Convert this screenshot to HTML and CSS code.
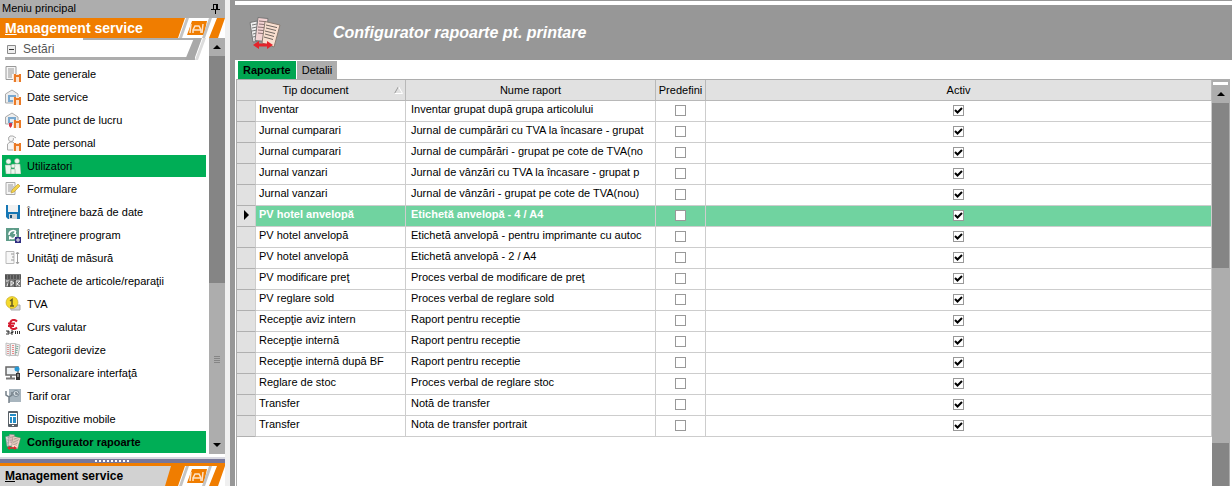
FILE: index.html
```html
<!DOCTYPE html>
<html lang="ro">

<head>
    <meta charset="utf-8">
    <meta name="viewport" content="width=device-width, initial-scale=1.0">
    <title>Configurator rapoarte pt. printare</title>
    <link rel="stylesheet" href="styles.css">
</head>

<body>
    <!-- shared icon parts -->
    <svg class="defs" aria-hidden="true">
        <symbol id="lift" viewBox="0 0 16 16">
            <path d="M8 8h8v8H8z" fill="#fbe3d0" />
            <path d="M9 8h2v8H9zM14 8h2v8h-2zM11 9h3v2h-3z" fill="#ea7a26" />
        </symbol>
        <symbol id="reports" viewBox="0 0 32 32">
            <path d="M1 5.500L8 4l3 20-7 1z" fill="#eee" stroke="#777" />
            <path d="M3 8l5-1M3 11l5-1M3 14l5-1M4 17l4-1M4 20l4-1" stroke="#777" />
            <path d="M9 .5l10 1-2 23-11-1z" fill="#f3d3d3" stroke="#777" />
            <path d="M10 4l7 .7M10 7l7 .7M9 10l7 .7M9 13l7 .7M9 16l6 .7" stroke="#8a7070" />
            <path d="M16 4.500L31 8l-6 22-12-4z" fill="#f9dfd0" stroke="#887a70" />
            <path d="M17 8l11 2.600M17 11l10 2.500M16 14l10 2.500M16 17l9 2.500M15 20l9 2.500" stroke="#6f6660" />
            <path d="M4 28l6-4v2.500h8V24l6 4-6 4v-2.500h-8V32z" fill="#e3242b" />
        </symbol>
        <symbol id="stripes" viewBox="0 0 52 20">
            <path d="M12 0h40v20H5z" fill="#fff" />
            <path d="M13 0h3L9 20H6z" fill="#c4c4c4" />
            <path d="M19 3h15l-3 14H14z" fill="#f07d00" />
            <path d="M18 6l-1 9M30 6l-1 9" fill="none" stroke="#fde3c8" stroke-width="1.500" />
            <path d="M20 15v-3l2-4h4l2 4v3M20 12h8" fill="none" stroke="#fde3c8" stroke-width="1.500" />
            <path d="M36 0h3l-7 20h-3z" fill="#c4c4c4" />
            <path d="M44 0h8l-7 20h-9z" fill="#f07d00" />
        </symbol>
    </svg>

    <div class="app">
        <aside class="sidebar">
            <div class="caption">
                <span>Meniu principal</span>
                <button class="pin" aria-label="Fixează meniul">
                    <svg width="9" height="11" viewBox="0 0 9 11"><path d="M2.500 1v5M2 1.500h4M0 6.500h9M4.500 7v4" stroke="#000" fill="none" /><path d="M5 1h2v6H5z" /></svg>
                </button>
            </div>
            <button class="group"><span><u>M</u>anagement service</span><svg width="52" height="20"><use href="#stripes" /></svg></button>

            <div class="panel">
                <div class="menu">
                    <button class="section" aria-expanded="true">
                        <svg width="9" height="9" viewBox="0 0 9 9"><path d="M.5.5h8v8h-8z" fill="#eee" stroke="#8a8a8a" /><path d="M2 4.500h5" stroke="#333" /></svg>
                        <span>Setări</span>
                        <svg class="slant" width="124" height="22" viewBox="0 0 124 22"><path d="M0 0h112v2H0z" fill="#adadad" /><path d="M111 0h8l-8 22h-9z" fill="#a8a8a8" /><path d="M120 0h3l-8 22h-3z" fill="#dcdcdc" /></svg>
                    </button>
                    <nav>
                        <a href="#" class="item"><svg viewBox="0 0 16 16"><path d="M1 .5h10v13H1z" fill="#f5f5f5" stroke="#999" /><path d="M3 3h6M3 5h6M3 7h6M3 9h4M3 11h4" stroke="#999" /><use href="#lift" /></svg>Date generale</a>
                        <a href="#" class="item"><svg viewBox="0 0 16 16"><path d="M.5 14V5L7 1l6 4v9z" fill="#eee" stroke="#aaa" /><path d="M3 6h8v7H3z" fill="#79a8cf" /><path d="M5 8h4v3H5z" fill="#dcecf6" /><use href="#lift" /></svg>Date service</a>
                        <a href="#" class="item"><svg viewBox="0 0 16 16"><path d="M.5 12V5L7 1l6 4v7z" fill="#eee" stroke="#aaa" /><path d="M3 5h8v6H3z" fill="#79a8cf" /><path d="M5 7h4v3H5z" fill="#dcecf6" /><path d="M4 11h3v3l-1.500 2L4 14z" fill="#d93545" /><use href="#lift" /></svg>Date punct de lucru</a>
                        <a href="#" class="item"><svg viewBox="0 0 16 16"><circle cx="6" cy="4" r="2.500" fill="#f6f6f6" stroke="#aaa" /><path d="M3.500 3L5 1h3l3 2M2.500 15V9L5 7h3l2 2v6z" fill="#f6f6f6" stroke="#aaa" /><use href="#lift" /></svg>Date personal</a>
                        <a href="#" class="item active"><svg viewBox="0 0 16 16"><g fill="#eef7ee" stroke="#8aa892" stroke-width=".5"><circle cx="3.500" cy="3.500" r="2.500" /><circle cx="12" cy="3" r="2.500" /><path d="M0 7h6v9H1zM9 6h6l1 10h-6z" /><circle cx="8" cy="8" r="2" /><path d="M6 11h4v5H6z" /></g></svg>Utilizatori</a>
                        <a href="#" class="item"><svg viewBox="0 0 16 16"><path d="M1 1.500h9v12H1z" fill="#f5f5f5" stroke="#aaa" /><path d="M3 4h5M3 6h6M3 8h5M3 10h4" stroke="#999" /><path d="M6 12l1-3 6-6 2 2-6 6z" fill="#f3d34a" stroke="#b7962f" stroke-width=".6" /></svg>Formulare</a>
                        <a href="#" class="item"><svg viewBox="0 0 16 16"><path d="M1 1h14v14H3l-2-2z" fill="#1677b5" /><path d="M3 1h10v7H3z" fill="#f2f2f2" /><path d="M4 10h8v5H4z" fill="#d0d5d8" /><path d="M5 11h2v3H5z" fill="#174f78" /></svg>Întreţinere bază de date</a>
                        <a href="#" class="item"><svg viewBox="0 0 16 16"><path d="M1 1h13v13H1z" fill="#5e9c89" /><path d="M4 8a4 4 0 0 1 7-3M11 7a4 4 0 0 1-6 4" fill="none" stroke="#fff" stroke-width="1.500" /><path d="M11 3v4H8zM4 9v4l3-3z" fill="#fff" /><path d="M10 10h6v6h-6z" fill="#302e82" /><path d="M11 13h4M13 11v4" stroke="#eee" /></svg>Întreţinere program</a>
                        <a href="#" class="item"><svg viewBox="0 0 16 16"><path d="M1 1.500h8v12H1z" fill="#f7f7f7" stroke="#bbb" /><path d="M6 4h3M7 7h2M6 10h3M12.500 3v10M11 4l1.500-2L14 4M11 12l1.500 2 1.500-2" fill="none" stroke="#999" /></svg>Unităţi de măsură</a>
                        <a href="#" class="item"><svg viewBox="0 0 16 16"><path d="M0 1h16v13H0z" fill="#777" /><path d="M0 3h16M0 5h16" stroke="#333" stroke-dasharray="2 1" /><path d="M1 8h3l-2 5M6 13V8l3 2-3 2M11 13V8h4l-3 3 3 2" fill="none" stroke="#eee" /><path d="M4 8v6M10 7v7" stroke="#333" /></svg>Pachete de articole/reparaţii</a>
                        <a href="#" class="item"><svg viewBox="0 0 16 16"><path d="M5 9h10v5H6z" fill="#d4d4d4" stroke="#aaa" /><circle cx="7" cy="6.500" r="6" fill="#f5da2c" stroke="#bda32a" stroke-width=".6" /><path d="M5 5l2-1.500V10M5 10h4" fill="none" stroke="#665c20" stroke-width="1.500" /></svg>TVA</a>
                        <a href="#" class="item"><svg viewBox="0 0 16 16"><path d="M12 2.500C9-.5 5 1 5 5.500s4 6 7 3M3 4.500h7M3 7h6" fill="none" stroke="#d51c30" stroke-width="2" /><path d="M1 12h3v3H1M4 13H2M6 12h2v1.500H6V15h2M10.500 12v3M12.500 12v3M14.500 12v3" fill="none" stroke="#333" /></svg>Curs valutar</a>
                        <a href="#" class="item"><svg viewBox="0 0 16 16"><path d="M1 1l4 1v12l-4-1zM5.500 1.500h5v12h-5zM11 2l4 1-2 11-3-1z" fill="#f3f3f3" stroke="#aaa" stroke-width=".7" /><path d="M3 3v9" stroke="#d99" stroke-width="2" stroke-dasharray="1" /><path d="M8 3v9" stroke="#e88" stroke-width="2" stroke-dasharray="1" /><path d="M12.500 4L11 12" stroke="#7a9" stroke-width="2" stroke-dasharray="1" /></svg>Categorii devize</a>
                        <a href="#" class="item"><svg viewBox="0 0 16 16"><path d="M1 2h12v8H1z" fill="#eef2f4" stroke="#666" stroke-width="1.500" /><path d="M1 13.500h9M6 10v3" stroke="#777" stroke-width="2" /><circle cx="12" cy="4" r="2.500" fill="#2797d3" /><path d="M11 8h4v7h-4z" fill="#333" /><path d="M13 9v3" stroke="#ddd" /></svg>Personalizare interfaţă</a>
                        <a href="#" class="item"><svg viewBox="0 0 16 16"><path d="M4 1h12v13H4z" fill="#a8b5be" /><circle cx="11" cy="5.500" r="3" fill="#d5dde2" stroke="#788894" /><path d="M11 4v2h2M4 15V9L1 7V3M4 9l3-2V4" fill="none" stroke="#758089" stroke-width="1.500" /></svg>Tarif orar</a>
                        <a href="#" class="item"><svg viewBox="0 0 16 16"><rect x="3" width="10" height="16" rx="1" fill="#596168" /><path d="M4 2h8v11H4z" fill="#fff" /><path d="M5 3h6v2H5zM5 6h2v6H5zM8 6h3v6H8z" fill="#258dc6" /><path d="M7 14.500h2" stroke="#fff" /></svg>Dispozitive mobile</a>
                        <a href="#" class="item active current"><svg viewBox="0 0 32 32"><use href="#reports" width="32" height="32" /></svg>Configurator rapoarte</a>
                    </nav>
                </div>
                <div class="scroll side-scroll">
                    <button class="arrow" aria-label="Sus"><i class="up"></i></button>
                    <div class="side-thumb"></div>
                    <div class="grip"></div>
                    <button class="arrow" aria-label="Jos"><i class="down"></i></button>
                </div>
            </div>

            <div class="splitter"><span></span></div>
            <button class="group collapsed"><span><u>M</u>anagement service</span><svg width="62" height="20" viewBox="-10 0 62 20"><path d="M-2 0h18l-7 20H-8z" fill="#f07d00" /><use href="#stripes" width="52" height="20" /></svg></button>
        </aside>

        <main class="content">
            <header class="title">
                <svg width="32" height="32"><use href="#reports" /></svg>
                <h1>Configurator rapoarte pt. printare</h1>
            </header>
            <div class="tabs" role="tablist">
                <button class="tab selected" role="tab" aria-selected="true">Rapoarte</button>
                <button class="tab" role="tab" aria-selected="false">Detalii</button>
            </div>
            <div class="grid">
                <div class="grid-body">
                    <table>
                        <colgroup>
                            <col class="c-mark">
                            <col class="c-tip">
                            <col class="c-nume">
                            <col class="c-pre">
                            <col>
                        </colgroup>
                        <thead>
                            <tr>
                                <th colspan="2"><div class="sorted"><span>Tip document</span><svg width="9" height="8" viewBox="0 0 9 8"><path d="M.5 7.500L4.500.5" stroke="#999" /><path d="M4.500.5l4 7h-8" fill="none" stroke="#fff" /></svg></div></th>
                                <th>Nume raport</th>
                                <th>Predefini</th>
                                <th>Activ</th>
                            </tr>
                        </thead>
                        <tbody>
                            <tr><td></td><td>Inventar</td><td>Inventar grupat după grupa articolului</td><td><input type="checkbox" aria-label="Predefinit"></td><td><input type="checkbox" aria-label="Activ" checked></td></tr>
                            <tr><td></td><td>Jurnal cumparari</td><td>Jurnal de cumpărări cu TVA la încasare - grupat</td><td><input type="checkbox" aria-label="Predefinit"></td><td><input type="checkbox" aria-label="Activ" checked></td></tr>
                            <tr><td></td><td>Jurnal cumparari</td><td>Jurnal de cumpărări - grupat pe cote de TVA(no</td><td><input type="checkbox" aria-label="Predefinit"></td><td><input type="checkbox" aria-label="Activ" checked></td></tr>
                            <tr><td></td><td>Jurnal vanzari</td><td>Jurnal de vânzări cu TVA la încasare - grupat p</td><td><input type="checkbox" aria-label="Predefinit"></td><td><input type="checkbox" aria-label="Activ" checked></td></tr>
                            <tr><td></td><td>Jurnal vanzari</td><td>Jurnal de vânzări - grupat pe cote de TVA(nou)</td><td><input type="checkbox" aria-label="Predefinit"></td><td><input type="checkbox" aria-label="Activ" checked></td></tr>
                            <tr class="row-selected"><td><i class="right"></i></td><td>PV hotel anvelopă</td><td>Etichetă anvelopă - 4 / A4</td><td><input type="checkbox" aria-label="Predefinit"></td><td><input type="checkbox" aria-label="Activ" checked></td></tr>
                            <tr><td></td><td>PV hotel anvelopă</td><td>Etichetă anvelopă - pentru imprimante cu autoc</td><td><input type="checkbox" aria-label="Predefinit"></td><td><input type="checkbox" aria-label="Activ" checked></td></tr>
                            <tr><td></td><td>PV hotel anvelopă</td><td>Etichetă anvelopă - 2 / A4</td><td><input type="checkbox" aria-label="Predefinit"></td><td><input type="checkbox" aria-label="Activ" checked></td></tr>
                            <tr><td></td><td>PV modificare preţ</td><td>Proces verbal de modificare de preţ</td><td><input type="checkbox" aria-label="Predefinit"></td><td><input type="checkbox" aria-label="Activ" checked></td></tr>
                            <tr><td></td><td>PV reglare sold</td><td>Proces verbal de reglare sold</td><td><input type="checkbox" aria-label="Predefinit"></td><td><input type="checkbox" aria-label="Activ" checked></td></tr>
                            <tr><td></td><td>Recepţie aviz intern</td><td>Raport pentru receptie</td><td><input type="checkbox" aria-label="Predefinit"></td><td><input type="checkbox" aria-label="Activ" checked></td></tr>
                            <tr><td></td><td>Recepţie internă</td><td>Raport pentru receptie</td><td><input type="checkbox" aria-label="Predefinit"></td><td><input type="checkbox" aria-label="Activ" checked></td></tr>
                            <tr><td></td><td>Recepţie internă după BF</td><td>Raport pentru receptie</td><td><input type="checkbox" aria-label="Predefinit"></td><td><input type="checkbox" aria-label="Activ" checked></td></tr>
                            <tr><td></td><td>Reglare de stoc</td><td>Proces verbal de reglare stoc</td><td><input type="checkbox" aria-label="Predefinit"></td><td><input type="checkbox" aria-label="Activ" checked></td></tr>
                            <tr><td></td><td>Transfer</td><td>Notă de transfer</td><td><input type="checkbox" aria-label="Predefinit"></td><td><input type="checkbox" aria-label="Activ" checked></td></tr>
                            <tr><td></td><td>Transfer</td><td>Nota de transfer portrait</td><td><input type="checkbox" aria-label="Predefinit"></td><td><input type="checkbox" aria-label="Activ" checked></td></tr>
                        </tbody>
                    </table>
                </div>
                <div class="scroll grid-scroll">
                    <div class="split-handle"></div>
                    <button class="arrow" aria-label="Sus"><i class="up"></i></button>
                    <div class="thumb"></div>
                    <div class="track"></div>
                    <div class="thumb"></div>
                </div>
            </div>
        </main>
    </div>
</body>

</html>
```
FILE: styles.css
```css
* {
    box-sizing: border-box;
}

body {
    margin: 0;
    font-family: "Liberation Sans", Arial, sans-serif;
    font-size: 11px;
    color: #000;
    background-color: #fff;
}

button {
    margin: 0;
    padding: 0;
    border: none;
    background: none;
    font: inherit;
    color: inherit;
    text-align: left;
}

svg {
    display: block;
    flex: none;
}

.defs {
    position: absolute;
    width: 0;
    height: 0;
}

.app {
    display: flex;
    height: 100vh;
    overflow: hidden;
}

/* left menu */
.sidebar {
    display: flex;
    flex-direction: column;
    width: 230px;
    flex: none;
    padding-right: 5px;
    background-color: #f0f0f0;
}

.caption {
    display: flex;
    align-items: center;
    justify-content: space-between;
    height: 18px;
    flex: none;
    padding: 0 5px 2px 2px;
    background-color: #adadad;
}

.group {
    display: flex;
    align-items: center;
    justify-content: space-between;
    height: 20px;
    flex: none;
    padding-left: 5px;
    background-color: #f07d00;
    color: #fff;
    font-size: 14px;
    font-weight: bold;
}

.group.collapsed {
    height: 23px;
    border-top: 3px solid #f07d00;
    background-color: #d2d2d2;
    color: #000;
    font-size: 12px;
}

.panel {
    display: flex;
    flex: 1;
    min-height: 0;
    background-color: #fff;
}

.menu {
    flex: 1;
    min-width: 0;
}

.section {
    display: flex;
    align-items: center;
    gap: 7px;
    width: 190px;
    height: 22px;
    margin: 0 0 3px 5px;
    padding: 3px 0 0 2px;
    border-bottom: 3px solid #adadad;
    color: #555;
    font-size: 12px;
}

.section .slant {
    margin: -3px -12px 0 auto;
    align-self: flex-start;
}

.item {
    display: flex;
    align-items: center;
    gap: 6px;
    height: 22px;
    margin: 0 3px 1px 2px;
    padding-left: 3px;
    color: #000;
    text-decoration: none;
    white-space: nowrap;
}

.item svg {
    width: 16px;
    height: 16px;
}

.item.active {
    background-color: #00ae56;
}

.item.current {
    font-weight: bold;
}

.splitter {
    display: flex;
    align-items: center;
    justify-content: center;
    height: 6px;
    flex: none;
    border-top: 2px solid #d8d8e0;
    background-color: #77779a;
}

.splitter span {
    width: 35px;
    height: 2px;
    background: repeating-linear-gradient(90deg, #fff 0 2px, #77779a 2px 4px);
}

/* scroll bars */
.scroll {
    display: flex;
    flex-direction: column;
    flex: none;
    background-color: #adadad;
}

.side-scroll {
    width: 16px;
    margin-bottom: 3px;
}

.arrow {
    display: flex;
    align-items: center;
    justify-content: center;
    height: 18px;
    flex: none;
}

.up,
.down {
    border: 4px solid transparent;
}

.up {
    border-top: none;
    border-bottom-color: #000;
}

.down {
    border-bottom: none;
    border-top-color: #000;
}

.right {
    display: inline-block;
    border: 5px solid transparent;
    border-left-color: #000;
    border-right: none;
}

.side-thumb {
    flex: 227;
    background-color: #858585;
}

.grip {
    flex: 153;
    background: repeating-linear-gradient(#858585 0 1px, #adadad 1px 2px) center / 6px 7px no-repeat;
}

.thumb {
    flex: none;
    height: 165px;
    background-color: #858585;
}

.track {
    flex: none;
    height: 175px;
}

/* right side */
.content {
    display: flex;
    flex-direction: column;
    flex: 1;
    min-width: 0;
    border-top: 1px solid #979797;
    border-left: 5px solid #979797;
    padding-top: 4px;
    background-color: #fff;
}

.title {
    display: flex;
    align-items: center;
    gap: 52px;
    height: 55px;
    flex: none;
    padding-left: 14px;
    background-color: #979797;
    color: #fff;
}

.title h1 {
    margin: 0;
    font-size: 16px;
    font-style: italic;
}

.tabs {
    display: flex;
    gap: 1px;
    height: 19px;
    flex: none;
    padding: 1px 3px 0;
}

.tab {
    padding: 0 5px;
    background-color: #adadad;
}

.tab.selected {
    background-color: #00a651;
    font-weight: bold;
}

.grid {
    display: flex;
    flex: 1;
    min-height: 0;
    margin: 0 2px 0 1px;
    border: 1px solid #adadad;
    border-bottom: none;
}

.grid-body {
    flex: 1;
    min-width: 0;
    overflow: hidden;
}

table {
    width: 100%;
    table-layout: fixed;
    border-collapse: separate;
    border-spacing: 0;
}

.c-mark {
    width: 19px;
}

.c-tip {
    width: 150px;
}

.c-nume {
    width: 250px;
}

.c-pre {
    width: 50px;
}

th,
td {
    padding: 0;
    border-right: 1px solid #cdcdcd;
    border-bottom: 1px solid #cdcdcd;
    white-space: nowrap;
    overflow: hidden;
    text-align: center;
}

th {
    height: 21px;
    border-color: #b8b8b8;
    background-color: #e1e1e1;
    font-weight: normal;
}

.sorted {
    display: flex;
    align-items: center;
    padding-right: 2px;
}

.sorted span {
    flex: 1;
}

td {
    height: 21px;
    padding-bottom: 2px;
    vertical-align: middle;
}

td:first-child {
    padding-bottom: 0;
    background-color: #e1e1e1;
    border-bottom-color: #b0b0b0;
}

td:nth-child(2),
td:nth-child(3) {
    padding: 0 0 4px 3px;
    text-align: left;
}

td:nth-child(3) {
    padding-left: 5px;
}

.row-selected td:not(:first-child) {
    background-color: #70d3a0;
    color: #fff;
    font-weight: bold;
}

td input {
    appearance: none;
    display: block;
    width: 11px;
    height: 11px;
    margin: 0 auto;
    border: 1px solid #999;
    background-color: #fff;
}

td input:checked {
    background-image: url("data:image/svg+xml,%3Csvg xmlns='http://www.w3.org/2000/svg' viewBox='0 0 9 9'%3E%3Cpath d='M1 4l2.500 2.500L8 2' fill='none' stroke='%23000' stroke-width='2'/%3E%3C/svg%3E");
}

.grid-scroll {
    width: 17px;
}

.split-handle {
    height: 3px;
    flex: none;
    margin: 2px 1px 0;
    background-color: #fff;
}
```
